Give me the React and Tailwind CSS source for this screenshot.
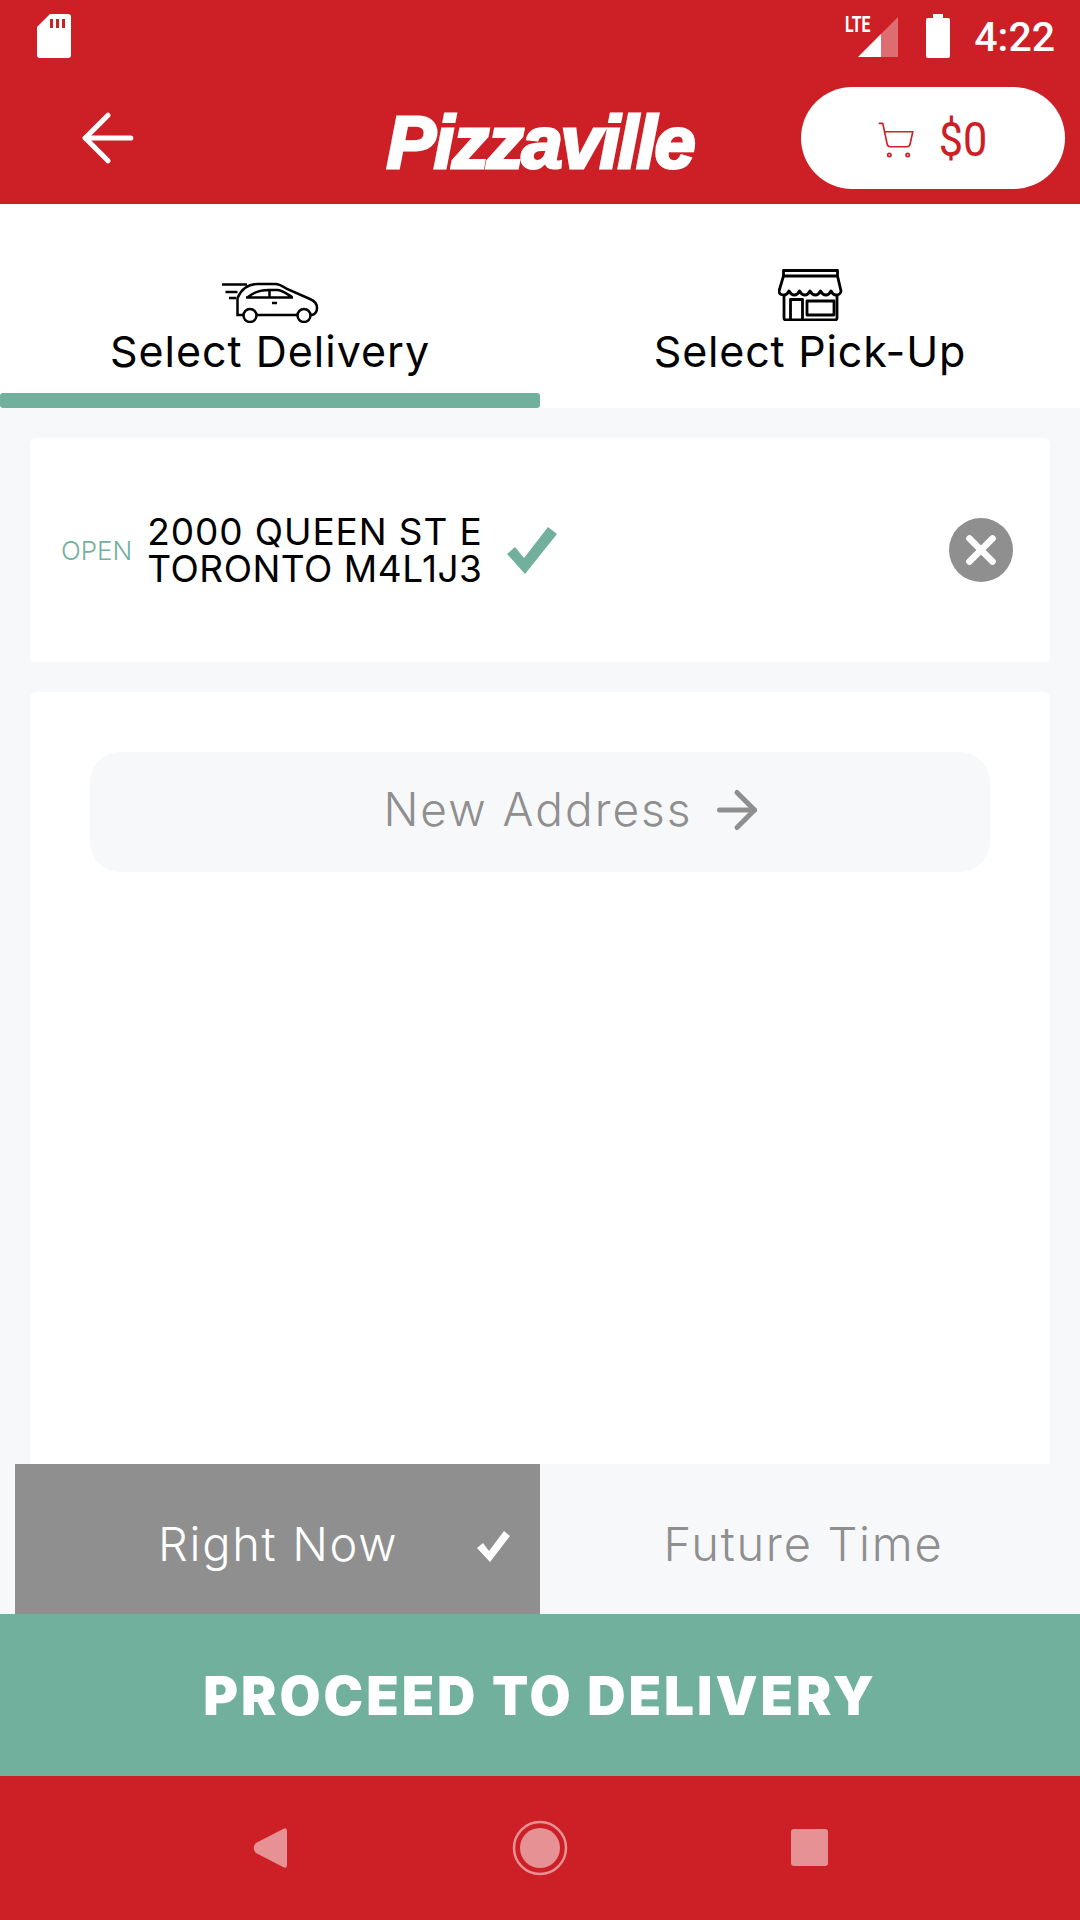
import { ArrowLeft, ArrowRight, ShoppingCart, X } from "lucide-react";

function StatusBar() {
  return (
    <div className="h-[72px] flex items-start justify-between pl-[36px] pr-[25px] pt-[14px]">
      <svg width="36" height="44" viewBox="0 0 36 44">
        <path d="M14 0h18a3 3 0 0 1 3 3v38a3 3 0 0 1-3 3H4a3 3 0 0 1-3-3V13z" fill="#fff" />
        <path d="M14 5h3v9h-3zM20 5h3v9h-3zM26 5h3v9h-3z" fill="#cd2026" />
      </svg>
      <div className="flex items-start">
        <div className="relative w-[53px] h-[44px] mr-[27px]">
          <span className="absolute left-0 top-0 font-['Roboto',sans-serif] font-bold text-[22px] leading-[22px] text-white scale-x-[0.72] origin-left">
            LTE
          </span>
          <svg className="absolute left-0 top-0" width="53" height="44" viewBox="0 0 53 44">
            <path d="M13 43 L36 20 V43 Z" fill="#fff" />
            <path d="M36 20 L53 3 V43 H36 Z" fill="#fff" fillOpacity="0.35" />
          </svg>
        </div>
        <svg width="26" height="44" viewBox="0 0 26 44">
          <path d="M8 0h10v4h5a2 2 0 0 1 2 2v36a2 2 0 0 1-2 2H3a2 2 0 0 1-2-2V6a2 2 0 0 1 2-2h5z" fill="#fff" />
        </svg>
        <span className="ml-[23px] font-['Roboto',sans-serif] font-medium text-[41px] leading-[46px] text-white">4:22</span>
      </div>
    </div>
  );
}

function Toolbar() {
  return (
    <div className="h-[132px] relative flex items-center justify-center">
      <button className="absolute left-[69px] top-[27px] text-white">
        <ArrowLeft size={78} strokeWidth={1.600} />
      </button>
      <span className="font-['Liberation_Sans',sans-serif] font-bold italic text-[74px] leading-none text-white tracking-[-2.2px] [-webkit-text-stroke:3px_white] pt-[9px]">
        Pizzaville
      </span>
      <div className="absolute right-[15px] top-[15px] w-[264px] h-[102px] rounded-full bg-white flex items-center justify-center gap-[20px] text-[#cd2026] pt-[3px]">
        <ShoppingCart size={40} strokeWidth={1} />
        <span className="font-['Roboto',sans-serif] text-[48px] leading-none scale-x-90">$0</span>
      </div>
    </div>
  );
}

function CarIcon() {
  return (
    <svg width="97" height="41" viewBox="0 0 97 41" fill="none" stroke="#000" strokeWidth="2.500">
      <path d="M0 2.500h25M3.500 10h12M7 16h7" />
      <path d="M21.500 33h-6V16C19 8 26 2 36 2h17c5 0 9 3 12 5l23 10c5 2 7 5 7 9 0 3-1 6-5 7h-1.500M34.500 33h41" />
      <circle cx="28" cy="33.500" r="6.500" />
      <circle cx="82" cy="33.500" r="6.500" />
      <path d="M24 15.500h47M26 15c6-5 13-7 21-7h8c5 0 10 4 15 7M47.500 8v7" />
      <path d="M50 21h5" />
    </svg>
  );
}

function StoreIcon() {
  return (
    <svg width="65" height="52" viewBox="0 0 65 52" fill="none" stroke="#000" strokeWidth="2.800" strokeLinejoin="round">
      <path d="M5.500 1.500h54V7h-54zM5.500 7 1 22c0 3 2 4 5 4s4-2 5-4c1 2 3 4 5.500 4s4-2 5-4c1 2 3 4 5.500 4s4-2 5-4c1 2 3 4 5.500 4s4-2 5-4c1 2 3 4 5.500 4s4-2 5-4c1 2 3 4 5 4s5-1 5-4L59.500 7" />
      <path d="M6 26v23a2 2 0 0 0 2 2h49a2 2 0 0 0 2-2V26" />
      <path d="M12.500 51V30.500h12V51" />
      <path d="M29 32h27v14H29z" />
    </svg>
  );
}

function App() {
  return (
    <div className="w-[1080px] h-[1920px] flex flex-col bg-[#f7f8fa] font-['Inter',sans-serif] overflow-hidden">
      <div className="h-[204px] bg-[#cd2026]">
        <StatusBar />
        <Toolbar />
      </div>

      <div className="h-[204px] bg-white grid grid-cols-2">
        <div className="relative flex flex-col items-center pt-[78px]">
          <CarIcon />
          <span className="text-[43px] leading-[48px] text-black tracking-[1px] font-normal mt-[4px]">Select Delivery</span>
          <div className="absolute left-0 right-0 bottom-0 h-[15px] rounded-[3px] bg-[#72b09e]" />
        </div>
        <div className="flex flex-col items-center pt-[65px]">
          <StoreIcon />
          <span className="text-[43px] leading-[48px] text-black tracking-[0.8px] font-normal mt-[6px]">Select Pick-Up</span>
        </div>
      </div>

      <div className="flex-1 flex flex-col px-[30px] pt-[30px] gap-[30px]">
        <div className="h-[224px] bg-white rounded-[6px] flex items-center pl-[31px] pr-[37px]">
          <span className="text-[26px] text-[#72b09e] font-light mr-[15px]">OPEN</span>
          <div className="text-[37px] leading-[37px] text-black tracking-[0.5px] whitespace-nowrap">
            <div className="tracking-[0.9px]">2000 QUEEN ST E</div>
            <div>TORONTO M4L1J3</div>
          </div>
          <svg className="ml-[24px]" width="50" height="47" viewBox="0 0 50 47">
            <path d="M0 27 L8 20 L17 31 L41 0 L50 7 L18 47 Z" fill="#72b09e" />
          </svg>
          <div className="ml-auto w-[64px] h-[64px] rounded-full bg-[#8f8f8f] flex items-center justify-center text-white">
            <X size={46} strokeWidth={3.500} />
          </div>
        </div>

        <div className="flex-1 bg-white rounded-t-[6px] px-[60px] pt-[60px]">
          <div className="h-[120px] rounded-[30px] bg-[#f7f8fa] flex items-center justify-center gap-[14px] text-[#8f8f8f] pl-[70px]">
            <span className="text-[46px] leading-[56px] font-light tracking-[2px] -mt-[6px]">New Address</span>
            <ArrowRight size={60} strokeWidth={2} className="-mt-[4px]" />
          </div>
        </div>
      </div>

      <div className="h-[150px] flex pl-[15px]">
        <div className="w-[525px] bg-[#8f8f8f] relative flex items-center text-white pl-[143px] pt-[10px]">
          <span className="text-[47px] leading-[56px] font-light tracking-[1.7px]">Right Now</span>
          <svg className="absolute left-[462px] top-[67px]" width="33" height="31" viewBox="0 0 33 31">
            <path d="M0 17 L6 12 L12 20 L27 0 L33 5 L13 31 Z" fill="#fff" />
          </svg>
        </div>
        <div className="flex-1 flex items-center justify-center text-[#8f8f8f] pr-[13px] pt-[10px]">
          <span className="text-[47px] leading-[56px] font-light tracking-[1.700px]">Future Time</span>
        </div>
      </div>

      <div className="h-[162px] bg-[#72b09e] flex items-center justify-center pt-[4px]">
        <span className="text-[53px] font-black text-white tracking-[3px]">PROCEED TO DELIVERY</span>
      </div>

      <div className="h-[144px] bg-[#cd2026] flex items-center justify-center">
        <svg width="600" height="60" viewBox="0 0 600 60">
          <path d="M14 30 Q13 28 16 25 L43 11 Q47 9 47 13 V47 Q47 51 43 49 L16 35 Q13 32 14 30Z" fill="#e69295" />
          <circle cx="300" cy="30" r="20" fill="#e69295" />
          <circle cx="300" cy="30" r="26" fill="none" stroke="#e69295" strokeWidth="2.500" />
          <rect x="551" y="11" width="37" height="37" rx="3" fill="#e69295" />
        </svg>
      </div>
    </div>
  );
}

export default App;
